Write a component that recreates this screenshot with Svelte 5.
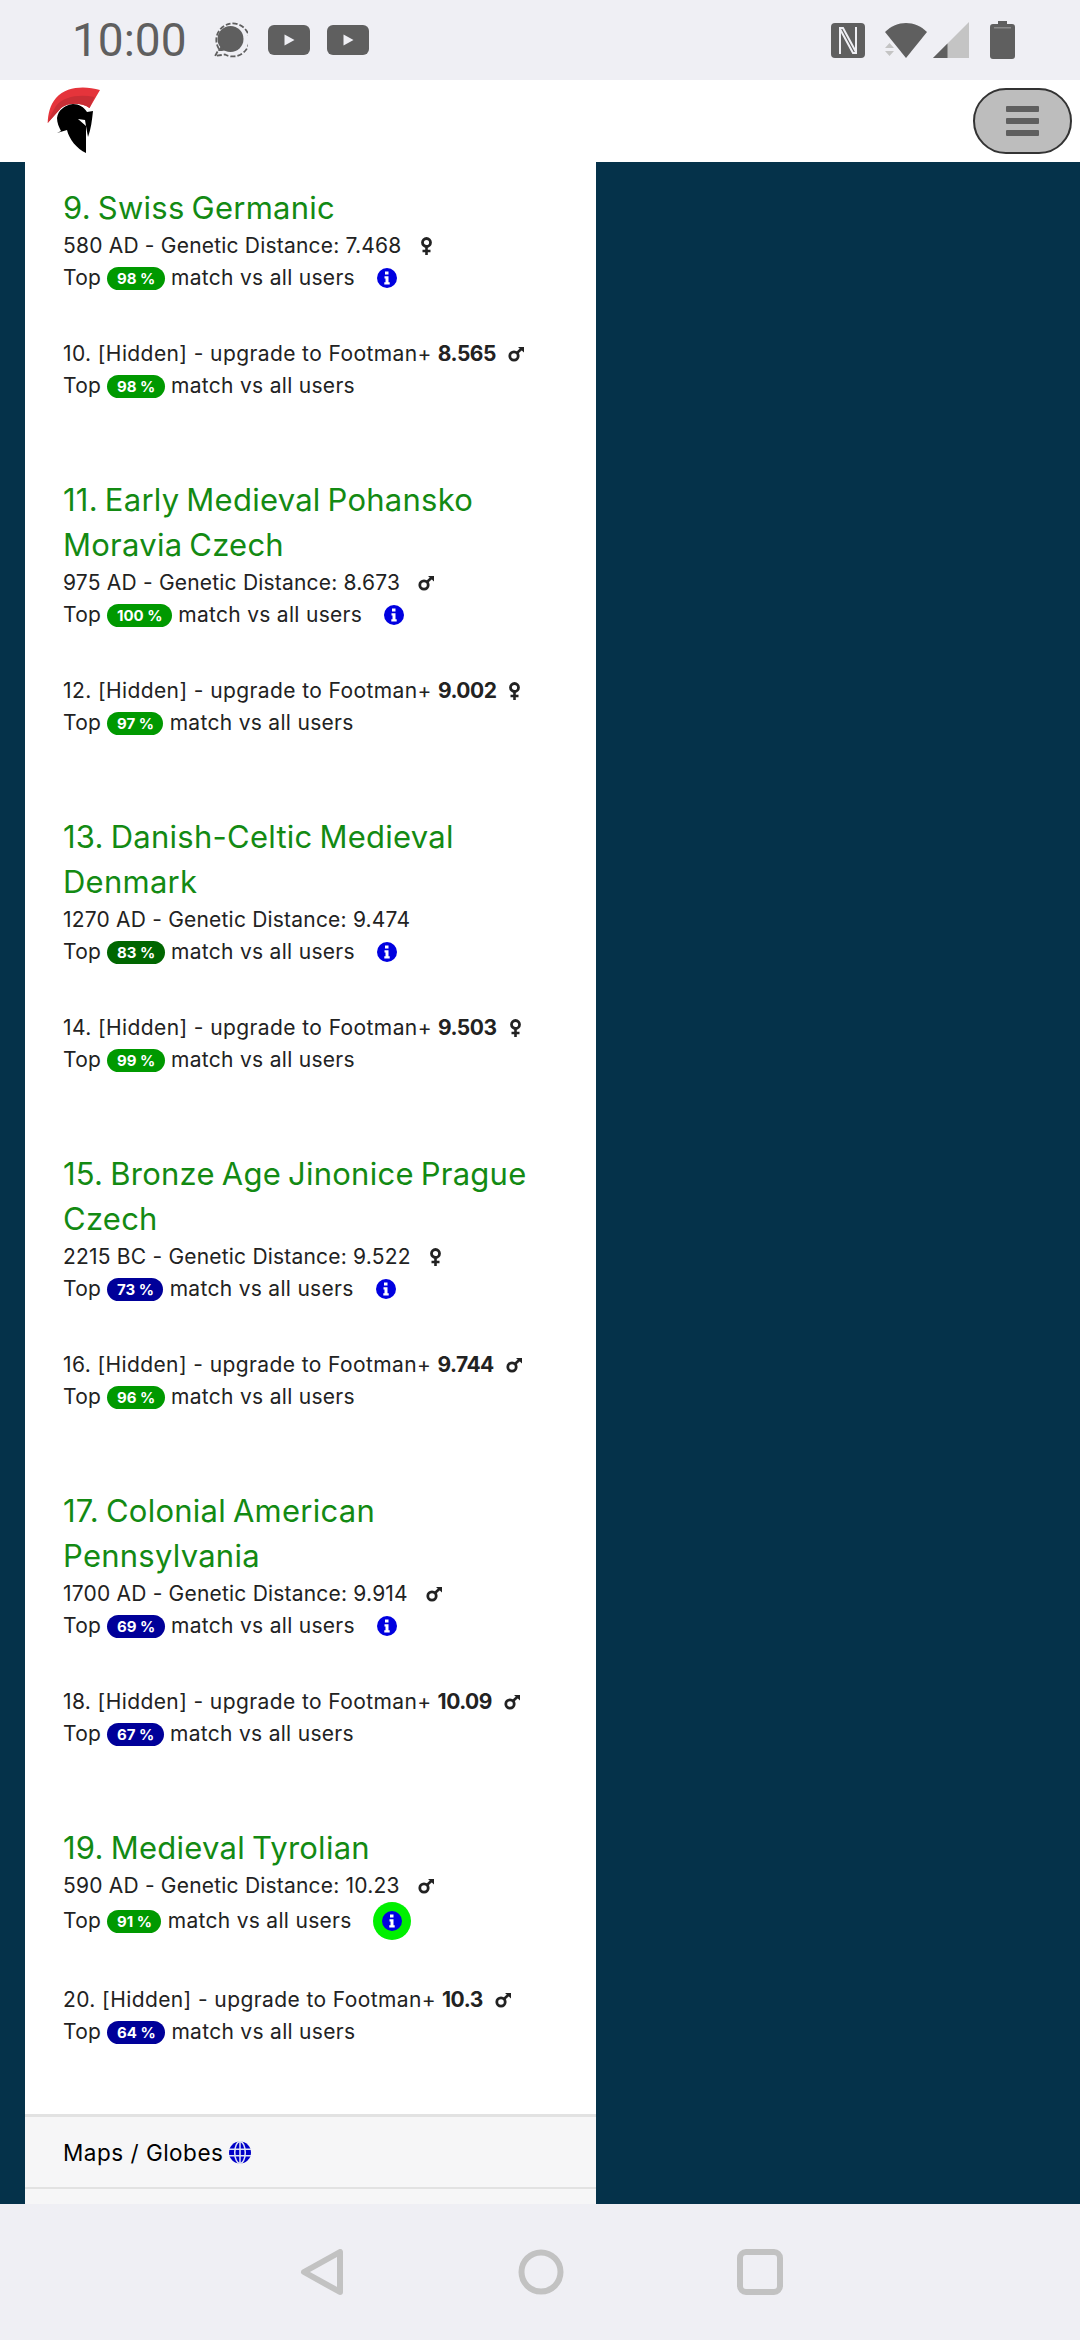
<script>
  const groups = [
    { n: 9, title: "Swiss Germanic", era: "580 AD", dist: "7.468", sex: "f", pct: 98, hn: 10, hdist: "8.565", hsex: "m", hpct: 98 },
    { n: 11, title: "Early Medieval Pohansko Moravia Czech", era: "975 AD", dist: "8.673", sex: "m", pct: 100, hn: 12, hdist: "9.002", hsex: "f", hpct: 97 },
    { n: 13, title: "Danish-Celtic Medieval Denmark", era: "1270 AD", dist: "9.474", sex: "", pct: 83, hn: 14, hdist: "9.503", hsex: "f", hpct: 99 },
    { n: 15, title: "Bronze Age Jinonice Prague Czech", era: "2215 BC", dist: "9.522", sex: "f", pct: 73, hn: 16, hdist: "9.744", hsex: "m", hpct: 96 },
    { n: 17, title: "Colonial American Pennsylvania", era: "1700 AD", dist: "9.914", sex: "m", pct: 69, hn: 18, hdist: "10.09", hsex: "m", hpct: 67 },
    { n: 19, title: "Medieval Tyrolian", era: "590 AD", dist: "10.23", sex: "m", pct: 91, hn: 20, hdist: "10.3", hsex: "m", hpct: 64, ring: true }
  ];

  function tone(pct) {
    if (pct >= 90) return "green";
    if (pct >= 80) return "dark";
    return "blue";
  }
</script>

{#snippet sexIcon(sex)}
  {#if sex === "f"}
    <svg class="sex" width="13" height="18" viewBox="0 0 13 18">
      <circle cx="6.500" cy="5.500" r="4" fill="none" stroke="#222" stroke-width="2.800" />
      <path d="M6.500 10v8M2.500 14h8" stroke="#222" stroke-width="2.600" fill="none" />
    </svg>
  {:else if sex === "m"}
    <svg class="sex" width="16" height="15" viewBox="0 0 16 15">
      <circle cx="6" cy="9" r="4.200" fill="none" stroke="#222" stroke-width="2.800" />
      <path d="M9 6 13.500 1.800" stroke="#222" stroke-width="2.600" fill="none" />
      <path d="M10 0h6v5.500z" fill="#222" />
    </svg>
  {/if}
{/snippet}

{#snippet matchLine(pct)}
  Top <span class="badge {tone(pct)}">{pct} %</span> match vs all users
{/snippet}

<div class="phone">
  <div class="status">
    <span class="time">10:00</span>
    <svg class="signal" width="36" height="36" viewBox="0 0 36 36">
      <circle cx="18.500" cy="17" r="13" fill="#5f5f5f" />
      <path d="M6 29l3-5 5 4-4 1z" fill="#5f5f5f" />
      <path d="M7 27A16.500 16.500 0 1 1 13 32.500L3 34z" fill="none" stroke="#5f5f5f" stroke-width="1.800" stroke-dasharray="5 2" />
    </svg>
    <svg class="yt" width="42" height="30" viewBox="0 0 42 30">
      <rect width="42" height="30" rx="6" fill="#5f5f5f" />
      <path d="M16.500 9.500v11l10-5.500z" fill="#efeff4" />
    </svg>
    <svg class="yt" width="42" height="30" viewBox="0 0 42 30">
      <rect width="42" height="30" rx="6" fill="#5f5f5f" />
      <path d="M16.500 9.500v11l10-5.500z" fill="#efeff4" />
    </svg>
    <span class="spacer"></span>
    <svg class="nfc" width="34" height="35" viewBox="0 0 34 35">
      <rect width="34" height="35" rx="4" fill="#5f5f5f" />
      <path d="M9 31V5h3l13 24M25 4v26h-3L9 6" fill="none" stroke="#efeff4" stroke-width="2" />
    </svg>
    <svg class="wifi" width="42" height="35" viewBox="0 0 42 35">
      <path d="M0 9C12 -3 30 -3 42 9L21 35z" fill="#5f5f5f" />
      <path d="M0 25l4.500-5 4.500 5zM0 28h9l-4.500 5z" fill="#c4c4c4" />
    </svg>
    <svg class="cell" width="36" height="36" viewBox="0 0 36 36">
      <path d="M36 0v36H0z" fill="#c4c4c4" />
      <path d="M14.500 21.500v14.500H0z" fill="#5f5f5f" />
    </svg>
    <svg class="batt" width="25" height="38" viewBox="0 0 25 38">
      <path d="M8 0h9v3h5a3 3 0 0 1 3 3v29a3 3 0 0 1-3 3H3a3 3 0 0 1-3-3V6a3 3 0 0 1 3-3h5z" fill="#5f5f5f" />
      <rect x="4" y="6" width="17" height="1.500" fill="#8a8a8a" />
    </svg>
  </div>

  <header>
    <svg class="logo" width="54" height="68" viewBox="0 0 54 68">
      <path d="M53 3C38 -1 20 -1 9 11 3 18 1 27 .7 36L14 21C20 16 34 15 42.500 21z" fill="#e5343b" />
      <path d="M47.500 10C33 7 17 9 9 19 6 24 3 29 .7 36L14 21C20 16 34 15 42.500 21z" fill="#c92e35" />
      <path d="M26 17C18 18 11 23 10 31 10 36 12 40 14 44L10 46 20 43C22 52 30 62 39 66V39L31 32 38 33 39 39 41 50C44 42 45 33 46 24L40 25C37 20 32 17 26 17z" fill="#000" />
    </svg>
    <button class="menu" aria-label="Menu">
      <span></span><span></span><span></span>
    </button>
  </header>

  <main>
    <div class="card">
      <div class="results">
        {#each groups as g}
          <section>
            <h3>{g.n}. {g.title}</h3>
            <p class="line">
              {g.era} - Genetic Distance: {g.dist}
              {#if g.sex}{@render sexIcon(g.sex)}{/if}
            </p>
            <p class="line top-row">
              {@render matchLine(g.pct)}
              <span class="info" class:ring={g.ring}>
                <svg width="20" height="20" viewBox="0 0 20 20">
                  <circle cx="10" cy="10" r="10" fill="#0000e0" />
                  <path d="M8 3.500h3.500v3H8zM7.500 8.200h4v6h1.200v2.300H7.300v-2.300h1.200v-3.700h-1z" fill="#fff" />
                </svg>
              </span>
            </p>
            <p class="line hidden-row">
              <span class="stretch">{g.hn}. [Hidden] - upgrade to Footman+</span>
              <b>{g.hdist}</b>
              {@render sexIcon(g.hsex)}
            </p>
            <p class="line top-row">{@render matchLine(g.hpct)}</p>
          </section>
        {/each}
      </div>

      <div class="list-item">
        Maps / Globes
        <svg class="globe" width="22" height="23" viewBox="0 0 23 23">
          <circle cx="11.500" cy="11.500" r="11.500" fill="#0000c8" />
          <path d="M0 8h23M0 15h23M11.500 0v23" stroke="#dfe3f5" stroke-width="1.600" />
          <ellipse cx="11.500" cy="11.500" rx="5.500" ry="11.500" fill="none" stroke="#dfe3f5" stroke-width="1.600" />
        </svg>
      </div>
      <div class="list-item next"></div>
    </div>
  </main>

  <nav>
    <svg width="46" height="46" viewBox="0 0 46 46">
      <path d="M5 23 41 3v40z" fill="none" stroke="#c2c2c2" stroke-width="6" stroke-linejoin="round" />
    </svg>
    <svg width="46" height="46" viewBox="0 0 46 46">
      <circle cx="23" cy="23" r="19.500" fill="none" stroke="#c2c2c2" stroke-width="6" />
    </svg>
    <svg width="46" height="46" viewBox="0 0 46 46">
      <rect x="3" y="3" width="40" height="40" rx="6" fill="none" stroke="#c2c2c2" stroke-width="6" />
    </svg>
  </nav>
</div>

<style>
  :global(body) {
    margin: 0;
    font-family: Inter, "Open Sans", sans-serif;
  }

  .phone {
    width: 1080px;
    height: 2340px;
    display: flex;
    flex-direction: column;
    overflow: hidden;
    background: #05324a;
  }

  .status {
    height: 80px;
    flex: none;
    background: #efeff4;
    display: flex;
    align-items: center;
    padding: 0 65px 0 72px;
    box-sizing: border-box;
  }

  .time {
    font-family: Roboto, sans-serif;
    font-size: 46px;
    color: #5f5f5f;
    width: 140px;
  }

  .signal { margin-right: 20px; }
  .yt { margin-right: 17px; }
  .spacer { flex: 1; }
  .nfc { margin-right: 20px; }
  .wifi { margin-right: 6px; }
  .cell { margin-right: 21px; }

  header {
    height: 82px;
    flex: none;
    background: #fff;
    display: flex;
    justify-content: space-between;
    align-items: center;
    padding: 0 8px 0 47px;
    box-sizing: border-box;
  }

  .menu {
    width: 99px;
    height: 66px;
    border: 2px solid #333;
    border-radius: 33px;
    background: #bdbdbd;
    display: flex;
    flex-direction: column;
    align-items: center;
    justify-content: center;
    gap: 6px;
    padding: 0;
  }

  .menu span {
    width: 33px;
    height: 6px;
    background: #5f5f5f;
    border-radius: 1px;
  }

  main {
    flex: 1;
    min-height: 0;
    overflow: hidden;
    padding: 0 484px 0 25px;
  }

  .card {
    background: #fff;
    width: 571px;
  }

  .results {
    padding: 23px 38px 66px;
  }

  section + section {
    margin-top: 75px;
  }

  h3 {
    margin: 0;
    font-size: 31px;
    line-height: 45px;
    font-weight: 400;
    letter-spacing: 0.25px;
    word-spacing: -2px;
    color: #138a13;
  }

  .line {
    margin: 0;
    font-size: 21px;
    line-height: 32px;
    letter-spacing: 0.2px;
    color: #222;
    display: flex;
    align-items: center;
    white-space: pre-wrap;
  }

  .top-row {
    letter-spacing: 0.3px;
  }

  .hidden-row {
    margin-top: 44px;
  }

  .stretch {
    letter-spacing: 0.4px;
  }

  .hidden-row b {
    font-weight: 700;
    letter-spacing: -0.5px;
    margin-left: 6px;
  }

  .sex {
    margin-left: 12px;
  }

  .badge {
    display: inline-block;
    padding: 0 9.500px;
    height: 23px;
    line-height: 23px;
    border-radius: 12px;
    color: #fff;
    font-size: 15px;
    font-weight: 700;
    letter-spacing: 0;
  }

  .green { background: #009900; }
  .dark { background: #006600; }
  .blue { background: #000099; }

  .info {
    display: flex;
    margin-left: 16px;
  }

  .info.ring {
    padding: 9px;
    margin-left: 15px;
    background: #00f000;
    border-radius: 50%;
  }

  .list-item {
    background: #f6f6f7;
    border-top: 3px solid #e2e2e2;
    height: 73px;
    box-sizing: border-box;
    padding-left: 38px;
    display: flex;
    align-items: center;
    font-size: 22.500px;
    letter-spacing: 0.5px;
    color: #000;
  }

  .list-item.next {
    border-top-width: 2px;
  }

  .globe {
    margin-left: 6px;
  }

  nav {
    height: 136px;
    flex: none;
    background: #efeff4;
    display: flex;
    align-items: center;
    gap: 173px;
    padding-left: 299px;
  }
</style>
